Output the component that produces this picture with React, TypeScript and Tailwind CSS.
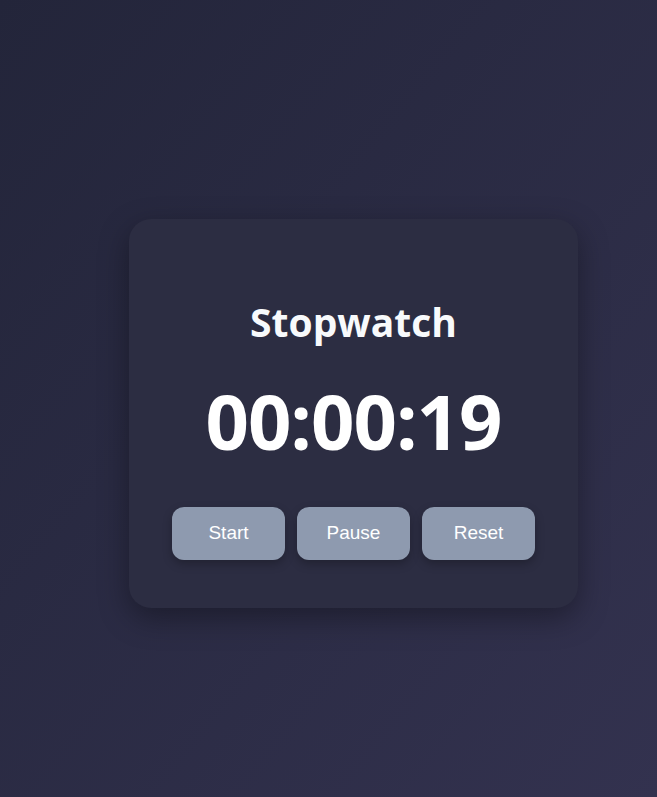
import React from 'react';

export default function App() {
  const buttons = ['Start', 'Pause', 'Reset'];

  return (
    <div className="min-h-screen w-full bg-gradient-to-br from-[#23253a] to-[#33324f] pt-[219px] pl-[129px]">
      {/* Carte du chronomètre */}
      <div className="w-[449px] h-[389px] rounded-[22px] bg-[#2c2d42] shadow-[0_10px_30px_rgba(0,0,0,0.35)] flex flex-col items-center pt-[83px]">
        <h1 className="text-[39px] leading-none font-bold text-[#f8fafc] font-['Open_Sans','Noto_Sans',sans-serif]">
          Stopwatch
        </h1>
        <div className="mt-[42px] text-[76px] leading-none font-bold text-white font-['Open_Sans','Noto_Sans',sans-serif] tracking-[-1px]">
          00:00:19
        </div>
        <div className="mt-[48px] flex gap-3">
          {buttons.map((label) => (
            <button
              key={label}
              className="w-[113px] h-[53px] rounded-[12px] bg-[#8e9aaf] text-white text-[19px] font-['Liberation_Sans',Arial,sans-serif] shadow-[0_4px_10px_rgba(0,0,0,0.25)]"
            >
              {label}
            </button>
          ))}
        </div>
      </div>
    </div>
  );
}
